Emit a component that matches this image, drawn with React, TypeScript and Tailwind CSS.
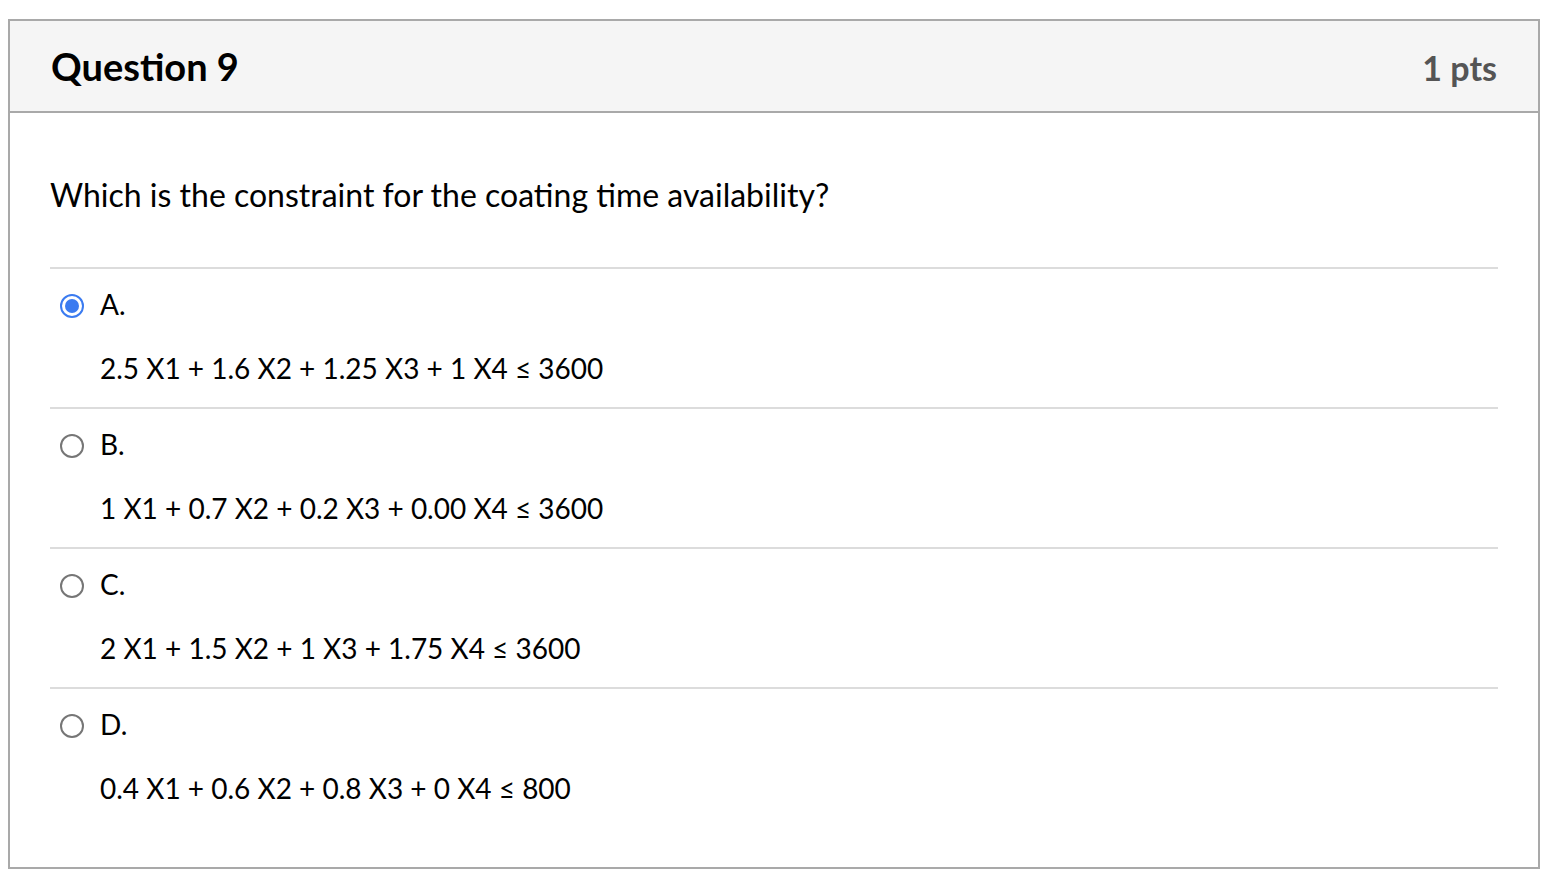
import React from "react";

const options = [
  { letter: "A.", formula: "2.5 X1 + 1.6 X2 + 1.25 X3 + 1 X4 ≤ 3600", selected: true },
  { letter: "B.", formula: "1 X1 + 0.7 X2 + 0.2 X3 + 0.00 X4 ≤ 3600", selected: false },
  { letter: "C.", formula: "2 X1 + 1.5 X2 + 1 X3 + 1.75 X4 ≤ 3600", selected: false },
  { letter: "D.", formula: "0.4 X1 + 0.6 X2 + 0.8 X3 + 0 X4 ≤ 800", selected: false },
];

function Radio({ selected }: { selected: boolean }) {
  if (selected) {
    return (
      <span className="flex h-[24px] w-[24px] items-center justify-center rounded-full border-[2px] border-[#3b7bf0] bg-white">
        <span className="h-[14px] w-[14px] rounded-full bg-[#3b7bf0]" />
      </span>
    );
  }
  return <span className="block h-[24px] w-[24px] rounded-full border-[2px] border-[#767676] bg-white" />;
}

export default function App() {
  return (
    <div className="min-h-[888px] bg-white pt-[19px] pl-[8px] pr-[10px]" style={{ fontFamily: "Lato, 'Open Sans', sans-serif" }}>
      <div className="w-[1532px] border-[2px] border-[#a9a9a9] bg-white">
        <div className="flex h-[92px] items-center justify-between border-b-[2px] border-[#a9a9a9] bg-[#f5f5f5] pl-[41px] pr-[41px]">
          <span className="text-[38px] font-bold leading-none text-black">Question 9</span>
          <span className="mt-[4px] text-[34px] font-bold leading-none text-[#555]">1 pts</span>
        </div>
        <div className="px-[40px] pt-[62px] pb-[40px]">
          <div className="text-[32px] leading-[39px] text-black">Which is the constraint for the coating time availability?</div>
          <div className="mt-[53px]">
            {options.map((o) => (
              <div key={o.letter} className="border-t-[2px] border-[#dcdcdc] pt-[17px] pb-[21px] text-[28px] text-black">
                <div className="flex h-[36px] items-center">
                  <div className="ml-[10px] mr-[16px] mt-[4px]">
                    <Radio selected={o.selected} />
                  </div>
                  <span className="leading-[36px]">{o.letter}</span>
                </div>
                <div className="mt-[28px] pl-[50px] leading-[36px]">{o.formula}</div>
              </div>
            ))}
          </div>
        </div>
      </div>
    </div>
  );
}
